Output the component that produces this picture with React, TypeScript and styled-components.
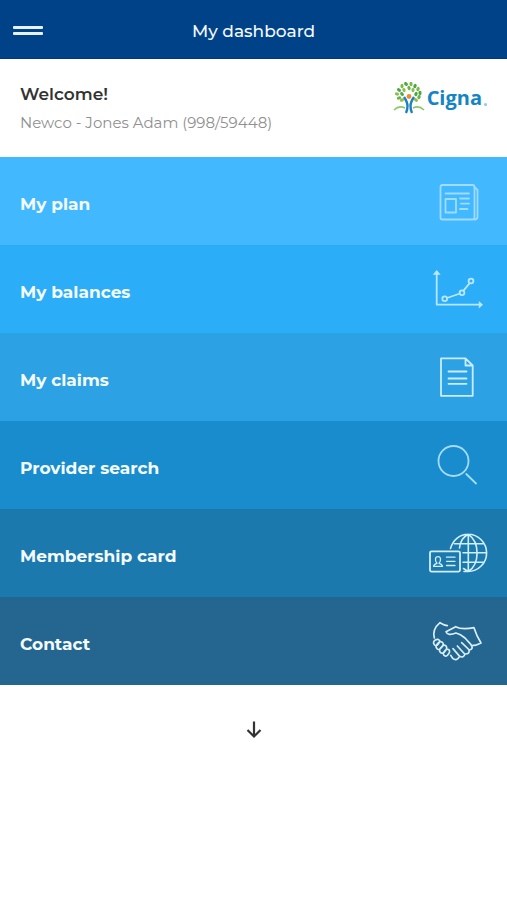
import React from "react";
import styled, { createGlobalStyle } from "styled-components";

const GlobalStyle = createGlobalStyle`
  *, *::before, *::after { box-sizing: border-box; }
  body {
    margin: 0;
    background: #ffffff;
    color: #333333;
    font-family: Montserrat, Inter, "Liberation Sans", sans-serif;
  }
`;

const Page = styled.div`
  min-height: 100vh;
  display: flex;
  flex-direction: column;
`;

const TopBar = styled.header`
  display: grid;
  grid-template-columns: 1fr auto 1fr;
  align-items: center;
  height: 59px;
  padding: 3px 13px 0;
  background: #004288;
  border-bottom: 1px solid #00387c;
`;

const MenuButton = styled.button`
  display: flex;
  flex-direction: column;
  justify-self: start;
  gap: 3px;
  width: 30px;
  padding: 0;
  border: 0;
  background: none;
  cursor: pointer;
`;

const MenuBar = styled.span`
  height: 3px;
  border-radius: 1px;
  background: #e6f3ff;
`;

const Title = styled.h1`
  margin: 0;
  color: #f4f9ff;
  font-size: 17px;
  font-weight: 500;
  line-height: 24px;
`;

const Welcome = styled.section`
  display: flex;
  justify-content: space-between;
  align-items: flex-start;
  height: 98px;
  padding: 23px 20px 0;
`;

const Greeting = styled.h2`
  margin: 0;
  font-size: 17px;
  font-weight: 600;
  line-height: 24px;
`;

const Member = styled.p`
  margin: 5px 0 0;
  color: #909090;
  font-size: 15px;
  line-height: 24px;
`;

const Logo = styled.div`
  display: flex;
  align-items: center;
  gap: 2px;
  color: #1584c5;
  font-family: "Open Sans", "Noto Sans", sans-serif;
  font-size: 20px;
  font-weight: 700;
  line-height: 32px;
`;

const LogoDot = styled.span`
  align-self: flex-end;
  width: 3px;
  height: 3px;
  margin-bottom: 8px;
  border-radius: 50%;
  background: #8cc9e8;
`;

const Menu = styled.nav`
  display: flex;
  flex-direction: column;
`;

const MenuLink = styled.a<{ $tone: string }>`
  display: flex;
  align-items: center;
  justify-content: space-between;
  height: 88px;
  padding: 0 20px;
  background: ${(p) => p.$tone};
  color: #f4fbff;
  font-size: 17px;
  font-weight: 700;
  line-height: 24px;
  text-decoration: none;
`;

const MenuLabel = styled.span`
  padding-top: 5px;
`;

const Icon = styled.svg<{ $ink: string }>`
  width: 60px;
  height: 60px;
  overflow: visible;
  fill: none;
  stroke: ${(p) => p.$ink};
  stroke-width: 1.8;
  stroke-linecap: round;
  stroke-linejoin: round;
`;

const MoreButton = styled.button`
  align-self: center;
  display: flex;
  margin-top: 32px;
  padding: 0;
  border: 0;
  background: none;
  color: #333333;
  cursor: pointer;
`;

const leaves: [number, number, string][] = [
  [6, 16, "#69b445"], [4, 12, "#8bc34a"], [6, 8, "#4fa64a"], [9, 4, "#79bb43"],
  [13, 2, "#4fa64a"], [18, 2, "#79bb43"], [22, 4, "#4fa64a"], [25, 7, "#79bb43"],
  [27, 11, "#4fa64a"], [26, 15, "#69b445"], [9, 12, "#4fa64a"], [11, 8, "#8bc34a"],
  [16, 6, "#69b445"], [20, 8, "#8bc34a"], [23, 12, "#4fa64a"], [9, 18, "#8bc34a"],
  [23, 18, "#8bc34a"],
];

const Tree = () => (
  <svg width="32" height="32" viewBox="0 0 32 32" aria-hidden="true">
    <path d="M1 28Q6 23 12 26M20 26Q26 23 31 28" fill="none" stroke="#8cc86a" strokeWidth="1.5" />
    {leaves.map(([x, y, tone]) => (
      <ellipse key={`${x}-${y}`} cx={x} cy={y} rx="2.2" ry="1.6" fill={tone} transform={`rotate(${(x * 43 + y * 17) % 180} ${x} ${y})`} />
    ))}
    <path d="M11 15Q14.500 20 14.500 24Q14.500 28 13 31M21 15Q17.500 20 17.500 24Q17.500 28 19 31" fill="none" stroke="#1b80bd" strokeWidth="2.4" />
    <circle cx="16" cy="14.500" r="2.400" fill="#f28c28" />
  </svg>
);

const PlanArt = () => (
  <>
    <rect x="13.5" y="14" width="34" height="34.5" rx="2" />
    <path d="M47.5 16L50.5 19V46Q50.5 48.5 47.5 48.5M18.5 22.5H42M33 27.5H42M34 32.7H42M33 38H40.5" />
    <rect x="18.5" y="28" width="10.5" height="13.5" />
  </>
);

const BalancesArt = () => (
  <>
    <path d="M9.7 13V45.7H54M20 39L33 34.5M36.3 31.8L42.7 24.2" />
    <path d="M9.7 11L13.7 15.8H5.7ZM56 45.7L51.8 42V49.4Z" fill="currentColor" stroke="none" />
    <circle cx="17.7" cy="39.7" r="2.4" />
    <circle cx="35" cy="33.7" r="2.4" />
    <circle cx="44" cy="22" r="2.4" />
  </>
);

const ClaimsArt = () => (
  <path d="M38.5 11.3H14V48.8H45.7V18.5ZV18.5H45.7M21.5 24.5H39.5M21.5 31.5H39.5M21.5 36.8H39.5" />
);

const SearchArt = () => (
  <>
    <circle cx="26.5" cy="26" r="15" />
    <path d="M39.3 39L49 48.5" />
  </>
);

const CardArt = () => (
  <>
    <rect x="3" y="28.3" width="30" height="20.3" rx="1.5" />
    <path d="M19.5 34.2H28M19.5 38.3H28M19.5 42.5H28M6.5 43.3Q7 41 10 40.3Q8 38 8.5 35.5Q9 33.7 11 33.7Q13 33.7 13.5 35.5Q14 38 12 40.3Q15 41 15.5 43.3Z" strokeWidth="1.3" />
    <path d="M23.5 25.5C26 17 33 11.3 41 11.3A18.5 18.5 0 0 1 41 48.5H37M41.3 11.3V48.5M41.3 11.3C36 14 33 19 32.5 25M41.3 11.3C53 19 53 41 41.3 48.5L36.5 45.5M27.5 20.7H57M36 29.7H59.5M36 39.3H57" strokeWidth="1.6" />
  </>
);

const ContactArt = () => (
  <g transform="translate(-7 -1) scale(0.3333)" strokeWidth="5">
    <path d="M43 84Q36 58 60 38Q73 46 82 47M78 65L107 50Q125 60 162 53Q169 76 183 99Q169 107 154 107M78 65Q83 79 108 69Q121 72 135 84L153 104Q162 118 148 120L125 98M147 120Q150 133 134 132L112 108M135 132Q131 145 119 139L99 116M119 139Q110 154 99 146L92 136" />
    <path d="M43 104Q37 96 46 90Q55 85 59 93Q60 98 51 106Q46 109 43 104ZM51 116Q44 109 54 99Q62 91 69 99Q72 106 61 116Q55 121 51 116ZM61 127Q55 120 64 111Q73 101 79 109Q83 116 72 127Q66 132 61 127ZM72 136Q67 131 75 122Q83 114 88 121Q91 127 82 136Q76 141 72 136Z" />
  </g>
);

const items = [
  { label: "My plan", tone: "#42b8ff", ink: "#a0dcff", Art: PlanArt },
  { label: "My balances", tone: "#2badf8", ink: "#b8e7ff", Art: BalancesArt },
  { label: "My claims", tone: "#2ca1e4", ink: "#c9edff", Art: ClaimsArt },
  { label: "Provider search", tone: "#188ccc", ink: "#a5dcfa", Art: SearchArt },
  { label: "Membership card", tone: "#1c79ad", ink: "#d0effc", Art: CardArt },
  { label: "Contact", tone: "#246690", ink: "#d8effa", Art: ContactArt },
];

export default function App() {
  return (
    <Page>
      <GlobalStyle />
      <TopBar>
        <MenuButton type="button" aria-label="Open menu">
          <MenuBar />
          <MenuBar />
        </MenuButton>
        <Title>My dashboard</Title>
      </TopBar>
      <main>
        <Welcome>
          <div>
            <Greeting>Welcome!</Greeting>
            <Member>Newco - Jones Adam (998/59448)</Member>
          </div>
          <Logo>
            <Tree />
            <span>Cigna</span>
            <LogoDot />
          </Logo>
        </Welcome>
        <Menu aria-label="Dashboard">
          {items.map(({ label, tone, ink, Art }) => (
            <MenuLink key={label} href="#" $tone={tone}>
              <MenuLabel>{label}</MenuLabel>
              <Icon viewBox="0 0 60 60" $ink={ink} color={ink} aria-hidden="true">
                <Art />
              </Icon>
            </MenuLink>
          ))}
        </Menu>
      </main>
      <MoreButton type="button" aria-label="Show more">
        <svg width="24" height="24" viewBox="0 0 24 24" fill="none" stroke="currentColor" strokeWidth="2.2" aria-hidden="true">
          <path d="M12 4.5V19M5.500 13L12 19.5L18.500 13" />
        </svg>
      </MoreButton>
    </Page>
  );
}
